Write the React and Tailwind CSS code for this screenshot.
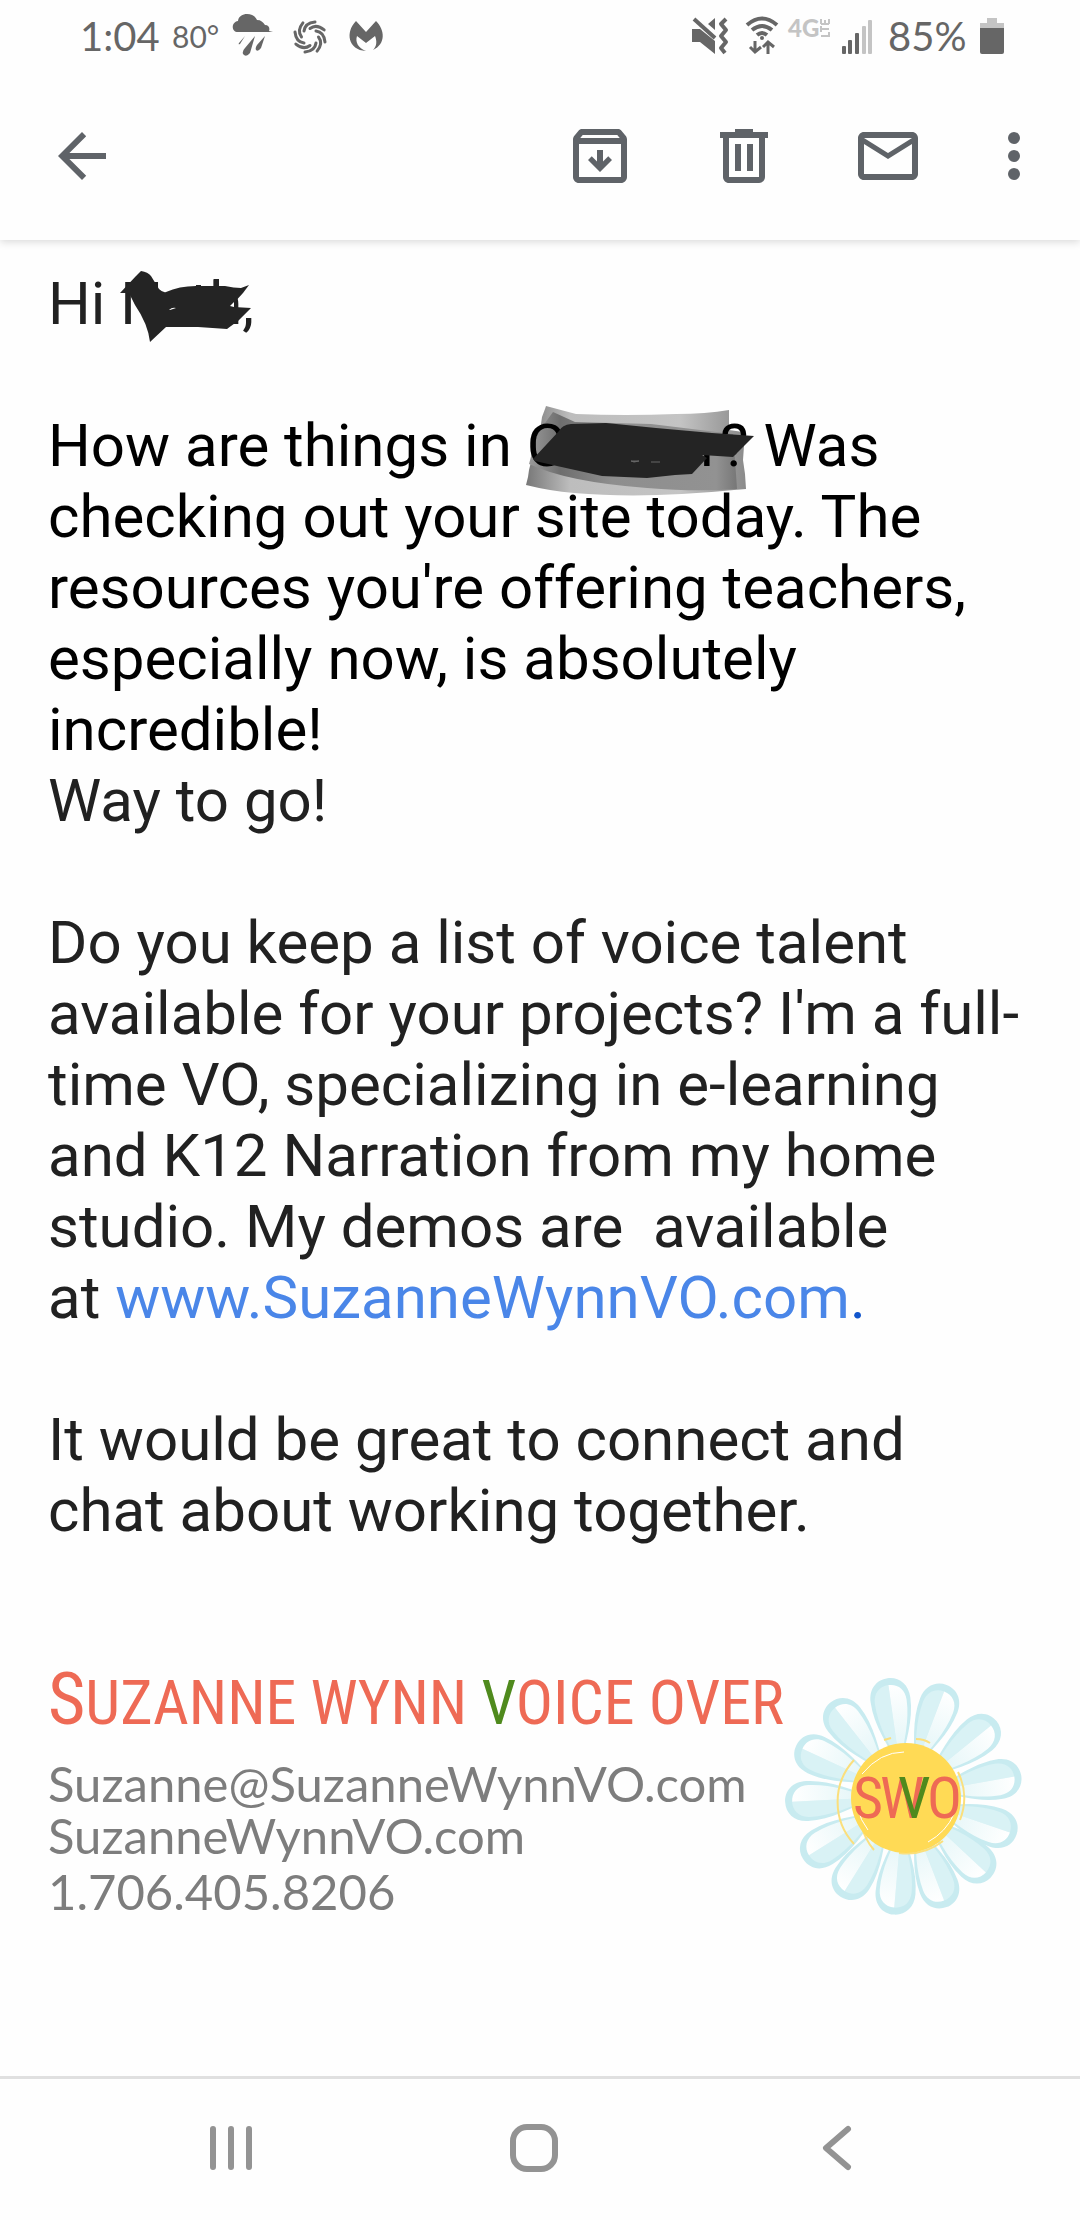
const PETALS = [-8, 21, 51, 80, 109, 133, 159, 185, 212, 238, 267, 295, 322]

const PETAL = 'M0 -30C-9 -52 -20 -74 -20 -97C-20 -111 -11 -119 0 -119C11 -119 20 -111 20 -97C20 -74 9 -52 0 -30Z'

const SWIRL = [0, 45, 90, 135, 180, 225, 270, 315]

function StatusBar() {
  return (
    <div className="flex h-18 items-start justify-between pl-20 pr-18 pt-3 text-[#666]">
      <div className="flex items-center gap-3">
        <span className="w-20 text-[40px] leading-12">1:04</span>
        <span className="w-11 text-[30px] leading-10">80°</span>
        <svg className="size-12" viewBox="228 12 48 48" fill="currentColor" aria-hidden="true">
          <path d="M238 32c-7 0-7-10 0-11 1-9 16-9 19-1 4 0 6 2 8 5 4 0 5 3 4 6l4 1z" />
          <path d="M245 36l-5 8q-2 1-1-1zM255 36l-5 17q-4 5-7 1-1-3 2-6zM265 36l-4 12q-3 4-5 2-1-2 1-5z" />
        </svg>
        <svg className="size-11" viewBox="-22 -23 44 44" fill="none" stroke="currentColor" strokeWidth="3" strokeLinecap="round" aria-hidden="true">
          {SWIRL.map((a) => (
            <path key={a} d="M-6 -6Q-5 -14 5 -15" transform={`rotate(${a})`} />
          ))}
        </svg>
        <svg className="size-11" viewBox="344 14 44 44" fill="currentColor" aria-hidden="true">
          <path d="M356 21l10 11 10-11c9 9 10 23-3 29 4-4 4-9 2-14l-9 7-9-7c-2 6 1 12 9 15-18-1-21-19-10-30z" />
        </svg>
      </div>

      <div className="flex items-center gap-2">
        <svg className="size-12" viewBox="686 11 48 48" fill="currentColor" aria-hidden="true">
          <path d="M690 28h8l15 12v13l-15-12h-8zM713 17v12l-7-6z" />
          <path d="M692 18l21 19" fill="none" stroke="currentColor" strokeWidth="4" />
          <path d="M724 18l-5 5 5 6-5 6 5 6-5 6 4 5" fill="none" stroke="currentColor" strokeWidth="4" strokeLinejoin="round" />
        </svg>
        <svg className="h-12 w-9" viewBox="745 11 36 48" fill="none" stroke="currentColor" strokeWidth="4" aria-hidden="true">
          <path d="M748 24q15-13 30 0M753 29q10-8 20 0M758 34q5-4 10 0" />
          <circle cx="763" cy="37" r="2" fill="currentColor" stroke="none" />
          <path d="M756 40v11M751 46l5 5 6-5M769 53v-12M764 46l5-5 6 5" strokeWidth="3" />
        </svg>
        <span className="flex h-12 w-11 items-start text-[#c4c4c4]">
          <span className="text-[24px] font-black leading-8">4G</span>
          <svg className="h-8 w-3" viewBox="0 0 12 32" fill="none" stroke="currentColor" strokeWidth="2" aria-hidden="true">
            <path d="M2 24h8v-4M2 17h8M2 14v6M2 12h8M2 12v-5M6 12v-4M10 12v-5" />
          </svg>
        </span>
        <svg className="h-12 w-10" viewBox="840 11 40 48" fill="currentColor" aria-hidden="true">
          <rect x="842" y="45" width="4" height="8" rx="1" />
          <rect x="848" y="39" width="4" height="14" rx="1" />
          <rect x="855" y="32" width="4" height="21" rx="1" />
          <rect x="862" y="25" width="4" height="28" rx="1" fill="#c4c4c4" />
          <rect x="868" y="19" width="4" height="34" rx="1" fill="#c4c4c4" />
        </svg>
        <span className="w-20 text-[40px] leading-12">85%</span>
        <svg className="h-12 w-8" viewBox="976 11 32 48" fill="currentColor" aria-hidden="true">
          <path d="M987 17h10v5h7v8h-24v-8h7z" fill="#c4c4c4" />
          <path d="M980 27h24v24q0 2-2 2h-20q-2 0-2-2z" />
        </svg>
      </div>
    </div>
  )
}

function Toolbar() {
  return (
    <div className="flex h-42 items-center justify-between pl-[46px] pr-12 text-[#5f6368]">
      <button type="button" aria-label="Back">
        <svg className="size-18" viewBox="0 0 24 24" fill="currentColor">
          <path d="M20 11H7.8l5.6-5.6L12 4l-8 8 8 8 1.4-1.4L7.8 13H20z" />
        </svg>
      </button>
      <div className="flex gap-18">
        <button type="button" aria-label="Archive">
          <svg className="size-18" viewBox="0 0 24 24" fill="currentColor">
            <path fillRule="evenodd" d="M20.54 5.23l-1.39-1.68C18.88 3.21 18.47 3 18 3H6c-.47 0-.88.21-1.16.55L3.46 5.23C3.17 5.57 3 6.02 3 6.5V19c0 1.1.9 2 2 2h14c1.1 0 2-.9 2-2V6.5c0-.48-.17-.93-.46-1.27zM6.24 5h11.52l.83 1H5.42l.82-1zM5 19V8h14v11H5z" />
            <path d="M11 10h2v3.85l1.75-1.75L16 13.35l-4 4-4-4 1.25-1.25L11 13.85z" />
          </svg>
        </button>
        <button type="button" aria-label="Delete">
          <svg className="size-18" viewBox="0 0 24 24" fill="currentColor">
            <path fillRule="evenodd" d="M15 4V3H9v1H4v2h1v13c0 1.1.9 2 2 2h10c1.1 0 2-.9 2-2V6h1V4h-5zm2 15H7V6h10v13z" />
            <path d="M9 8h2v9H9zM13 8h2v9h-2z" />
          </svg>
        </button>
        <button type="button" aria-label="Mark as unread">
          <svg className="size-18" viewBox="0 0 24 24" fill="currentColor">
            <path fillRule="evenodd" d="M22 6c0-1.1-.9-2-2-2H4c-1.1 0-2 .9-2 2v12c0 1.1.9 2 2 2h16c1.1 0 2-.9 2-2V6zm-2 0l-8 5-8-5h16zm0 12H4V8l8 5 8-5v10z" />
          </svg>
        </button>
        <button type="button" aria-label="More options">
          <svg className="h-18 w-9" viewBox="6 0 12 24" fill="currentColor">
            <circle cx="12" cy="6" r="2" />
            <circle cx="12" cy="12" r="2" />
            <circle cx="12" cy="18" r="2" />
          </svg>
        </button>
      </div>
    </div>
  )
}

// first name, inked over
function HiddenName() {
  return (
    <span className="relative inline-flex w-[122px] justify-between">
      <span>N</span>
      <span>h</span>
      <svg className="absolute -left-1 top-0 h-20 w-36" viewBox="116 268 144 80" fill="#242424" aria-hidden="true">
        <path d="M120 293l16-17 5-5q7 1 10 5l8 13q4 4 7 3 13-6 30-6h29q9 2 16 2l8-3-6 8-11 12 2 2 17 1-13 13-7 5-4 3-29-2h-32l-16 15q-2-18-15-37l-6-12z" />
        <path d="M214 279h5v12h-5zM196 285h5v4h-5z" />
        <path d="M169 310q3-3 7-2l-6 2zM230 306l4-4v5z" fill="#fff" />
      </svg>
    </span>
  )
}

// city name, taped and inked over
function HiddenCity() {
  return (
    <span className="relative isolate inline-flex w-[222px] justify-between">
      <svg className="absolute -left-1 -top-1 -z-10 h-24 w-60 overflow-visible" viewBox="522 406 240 96" aria-hidden="true">
        <defs>
          <linearGradient id="tape">
            <stop offset="0" stopColor="#777" />
            <stop offset=".2" stopColor="#bdbdbd" />
            <stop offset=".7" stopColor="#c4c4c4" />
            <stop offset="1" stopColor="#8a8a8a" />
          </linearGradient>
          <linearGradient id="fold">
            <stop offset="0" stopColor="#9a9a9a" />
            <stop offset=".15" stopColor="#6e6e6e" />
            <stop offset=".4" stopColor="#8e8e8e" />
            <stop offset=".9" stopColor="#929292" />
            <stop offset="1" stopColor="#777" />
          </linearGradient>
        </defs>
        <path d="M545 406l30 8q50 2 100 0 30 0 53-4v20l14 2 1 14-1 14 2 14 1 15-12 1q-90 9-160 3-24-2-48-8l2-8 1-7 2-8 3-9 3-15 3-7 2-14 3-8z" fill="url(#tape)" />
        <path d="M552 412l22 10 76 2 82 10 3 40 1 15q-40 3-90-1-80-6-118-24l8-30z" fill="url(#fold)" />
      </svg>
      <span>C</span>
      <span>r?</span>
      <svg className="absolute -left-1 -top-1 h-24 w-60 overflow-visible" viewBox="522 406 240 96" fill="#242424" aria-hidden="true">
        <path d="M532 459l26-28q3-6 12-7l35-1 50 5 56 5 42 3-21 21-31-2 5 3-15 16-17 1-28 3-45-2-45-10-22-5z" />
        <path d="M630 461l8 0-5 1zM650 462h9" fill="#777" stroke="#666" strokeWidth="1" />
      </svg>
    </span>
  )
}

function Daisy() {
  return (
    <svg className="mr-1 mt-[30px] size-60 shrink-0" viewBox="-120 -120 240 240" role="img" aria-label="SWO">
      <defs>
        <linearGradient id="shine" x1="0" y1="0" x2="0" y2="1">
          <stop offset="0" stopColor="#fff" />
          <stop offset="1" stopColor="#dff4f6" />
        </linearGradient>
      </defs>
      {PETALS.map((a) => (
        <g key={a} transform={`rotate(${a})`}>
          <path d={PETAL} fill="#c8ebf0" />
          <path d="M0 -32C-8 -54 -16 -74 -16 -95C-16 -106 -9 -112 0 -112Z" fill="#d9f2f5" />
          <path d="M0 -32C8 -54 16 -74 16 -95C16 -106 9 -112 0 -112Z" fill="url(#shine)" />
        </g>
      ))}
      <g fill="none" stroke="#fbdf7c" strokeWidth="2">
        <path d="M-50 -36A62 62 0 0 0 -50 48M-20 -56l7 -2M12 -57q8 0 14 4M54 -24A60 60 0 0 1 56 24M-5 57q25 3 44 -12M-44 26q5 18 14 28" />
      </g>
      <circle cx="2" cy="2" r="55" fill="#ffda55" />
      <path d="M-42 -22Q-24 -44 0 -44M-46 12Q-44 24 -36 34M24 46Q42 36 50 18" fill="none" stroke="#fff" strokeWidth="1" />
      <g className="font-['Roboto_Condensed','Roboto',sans-serif]" fontSize="58" fill="#ee6a55">
        <text x="-51" y="22">S</text>
        <text x="-24" y="22">W</text>
        <text x="-6" y="22" fill="#4f8a1d">V</text>
        <text x="23" y="22">O</text>
      </g>
    </svg>
  )
}

function Signature() {
  return (
    <div className="mt-25 flex items-start justify-between">
      <div className="text-[#7d7d7d]">
        <p className="whitespace-nowrap font-['Roboto_Condensed','Roboto',sans-serif] text-[62px] leading-27 text-[#ee6a55]">
          <span className="text-[72px]">S</span>UZANNE WYNN <span className="text-[#4f8a1d]">V</span>OICE OVER
        </p>
        <div className="font-['Lato',sans-serif] text-[49px] leading-13">
          <p>Suzanne@SuzanneWynnVO.com</p>
          <p>SuzanneWynnVO.com</p>
          <p className="mt-1">1.706.405.8206</p>
        </div>
      </div>
      <Daisy />
    </div>
  )
}

function NavBar() {
  return (
    <nav className="flex h-36 items-center justify-around border-t-3 border-[#e0e0e0] pb-1 pl-20 pr-23 text-[#939393]">
      <button type="button" aria-label="Recent apps">
        <svg className="size-12" viewBox="0 0 48 48" fill="none" stroke="currentColor" strokeWidth="6" strokeLinecap="round">
          <path d="M6 5v38M24 5v38M42 5v38" />
        </svg>
      </button>
      <button type="button" aria-label="Home">
        <svg className="size-12" viewBox="0 0 48 48" fill="none" stroke="currentColor" strokeWidth="6">
          <rect x="3" y="3" width="42" height="42" rx="14" />
        </svg>
      </button>
      <button type="button" aria-label="Back">
        <svg className="size-12" viewBox="0 0 48 48" fill="none" stroke="currentColor" strokeWidth="6" strokeLinecap="round" strokeLinejoin="round">
          <path d="M35 5L13 24l22 19" />
        </svg>
      </button>
    </nav>
  )
}

export default function App() {
  return (
    <div className="flex min-h-screen flex-col bg-[#fefefe] font-['Lato',sans-serif]">
      <header className="relative shadow-[0_2px_8px_rgba(0,0,0,0.15)]">
        <StatusBar />
        <Toolbar />
      </header>

      <main className="flex-1 pl-12 pr-14 pt-7 font-['Roboto',sans-serif] text-[60px] leading-[71px] text-[#212121]">
        <p>
          Hi <HiddenName />,
        </p>
        <p className="mt-[71px] text-black">
          How are things in <HiddenCity /> Was checking out your site today. The resources you're offering teachers,
          especially now, is absolutely incredible!
        </p>
        <p>Way to go!</p>
        <p className="mt-[71px]">
          Do you keep a list of voice talent available for your projects? I'm a full-time VO, specializing in e-learning
          and K12 Narration from my home studio. My demos are&nbsp; available at&nbsp;
          <a href="http://www.SuzanneWynnVO.com" className="text-[#4a86e8]">
            www.SuzanneWynnVO.com<span className="text-[#1155cc]">.</span>
          </a>
        </p>
        <p className="mt-[71px]">It would be great to connect and chat about working together.</p>
        <Signature />
      </main>

      <NavBar />
    </div>
  )
}
